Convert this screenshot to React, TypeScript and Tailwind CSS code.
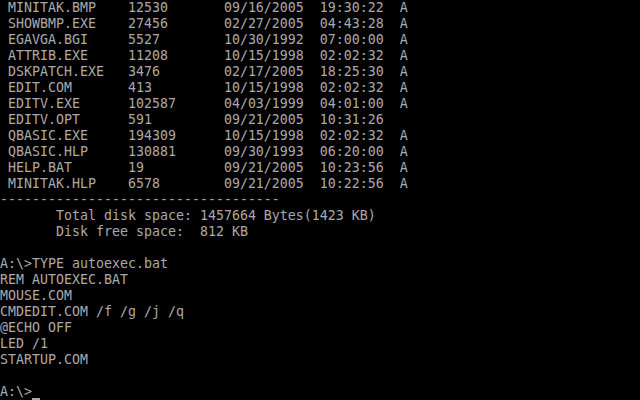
import React from "react";

const files: [string, string, string, string, string][] = [
  ["MINITAK.BMP", "12530", "09/16/2005", "19:30:22", "A"],
  ["SHOWBMP.EXE", "27456", "02/27/2005", "04:43:28", "A"],
  ["EGAVGA.BGI", "5527", "10/30/1992", "07:00:00", "A"],
  ["ATTRIB.EXE", "11208", "10/15/1998", "02:02:32", "A"],
  ["DSKPATCH.EXE", "3476", "02/17/2005", "18:25:30", "A"],
  ["EDIT.COM", "413", "10/15/1998", "02:02:32", "A"],
  ["EDITV.EXE", "102587", "04/03/1999", "04:01:00", "A"],
  ["EDITV.OPT", "591", "09/21/2005", "10:31:26", ""],
  ["QBASIC.EXE", "194309", "10/15/1998", "02:02:32", "A"],
  ["QBASIC.HLP", "130881", "09/30/1993", "06:20:00", "A"],
  ["HELP.BAT", "19", "09/21/2005", "10:23:56", "A"],
  ["MINITAK.HLP", "6578", "09/21/2005", "10:22:56", "A"],
];

function row(f: [string, string, string, string, string]) {
  return (
    " " +
    f[0].padEnd(15) +
    f[1].padEnd(12) +
    f[2].padEnd(12) +
    f[3].padEnd(10) +
    f[4]
  );
}

const lines: string[] = [
  ...files.map(row),
  "-".repeat(35),
  "       Total disk space: 1457664 Bytes(1423 KB)",
  "       Disk free space:  812 KB",
  "",
  "A:\\>TYPE autoexec.bat",
  "REM AUTOEXEC.BAT",
  "MOUSE.COM",
  "CMDEDIT.COM /f /g /j /q",
  "@ECHO OFF",
  "LED /1",
  "STARTUP.COM",
  "",
];

export default function App() {
  return (
    <div
      className="w-[640px] h-[400px] bg-black text-[#aaaaaa] overflow-hidden"
      style={{ fontFamily: '"DejaVu Sans Mono", monospace' }}
    >
      <div className="flex flex-col text-[13.29px] leading-[16px]">
        {lines.map((l, i) => (
          <div key={i} className="h-4 whitespace-pre">
            {l}
          </div>
        ))}
        <div className="h-4 whitespace-pre flex">
          <span>A:\&gt;</span>
          <span className="w-2 h-4 flex flex-col justify-end">
            <span className="block h-[2px] w-2 bg-[#aaaaaa]"></span>
          </span>
        </div>
      </div>
    </div>
  );
}
